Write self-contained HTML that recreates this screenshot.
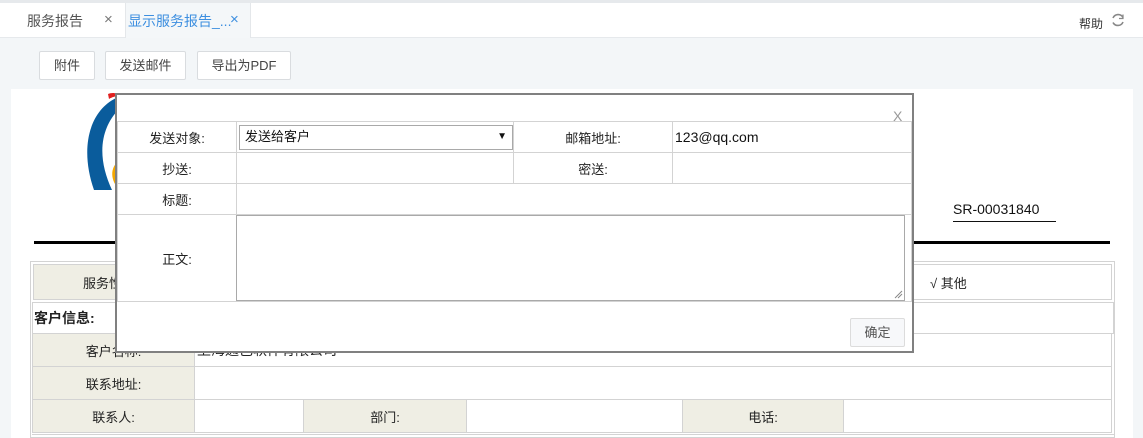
<!DOCTYPE html>
<html><head><meta charset="utf-8"><style>
*{margin:0;padding:0;box-sizing:border-box}
body{width:1143px;height:438px;overflow:hidden;background:#f3f6f8;font-family:"Liberation Sans","Noto Sans CJK SC",sans-serif;font-size:13px;color:#333;position:relative}
.a{position:absolute}
.btn{position:absolute;top:51px;height:29px;background:#fff;border:1px solid #d9dcdf;border-radius:2px;text-align:center;line-height:27px;font-size:13px;color:#444}
.c{position:absolute;border:1px solid #d3d3d3;font-size:13px;color:#222;display:flex;align-items:center;justify-content:center}
.lb{background:#efeee4}
</style></head><body>
<div class="a" style="left:0;top:0;width:1143px;height:38px;background:#fff;border-top:3px solid #e6e9ec;border-bottom:1px solid #e6e9ec"></div>
<div class="a" style="left:125px;top:3px;width:126px;height:35px;background:#f4f7f9;border-left:1px solid #e4e7ea;border-right:1px solid #e4e7ea"></div>
<div class="a" style="left:27px;top:11px;font-size:14px;color:#555">服务报告</div>
<div class="a" style="left:104px;top:11px;font-size:15px;line-height:18px;color:#777">×</div>
<div class="a" style="left:128px;top:11px;font-size:14px;color:#3d8fe0">显示服务报告_...</div>
<div class="a" style="left:230px;top:11px;font-size:15px;line-height:18px;color:#3d8fe0">×</div>
<div class="a" style="left:1079px;top:15px;font-size:12px;color:#333">帮助</div>
<svg class="a" style="left:1110px;top:12px" width="16" height="16" viewBox="0 0 16 16"><path d="M3 6A5.5 5.5 0 0 1 13 5.5M13 10A5.5 5.5 0 0 1 3 10.5" fill="none" stroke="#888" stroke-width="1.6"/><path d="M13 2.5v4h-4" fill="none" stroke="#888" stroke-width="1.2"/></svg>

<div class="btn" style="left:39px;width:56px">附件</div>
<div class="btn" style="left:105px;width:81px">发送邮件</div>
<div class="btn" style="left:197px;width:94px">导出为PDF</div>

<div class="a" style="left:11px;top:89px;width:1122px;height:349px;background:#fff"></div>
<svg class="a" style="left:82px;top:90px" width="40" height="105" viewBox="0 0 40 105"><path d="M34 8 C6 22 -2 60 12 100 L30 100 C16 70 16 40 38 18Z" fill="#0a5c9c"/><path d="M26 4 C30 2 36 3 38 6 C34 6 30 7 27 9Z" fill="#e02020"/><path d="M38 70 C26 78 30 92 36 98 L38 98Z" fill="#f5a800"/></svg>
<div class="a" style="left:953px;top:201px;font-size:14px;color:#111">SR-00031840</div>
<div class="a" style="left:953px;top:221px;width:103px;height:1px;background:#111"></div>
<div class="a" style="left:34px;top:241px;width:1076px;height:3px;background:#000"></div>

<div class="a" style="left:30px;top:261px;width:1085px;height:177px;border:1px solid #d3d3d3"></div>
<div class="c lb" style="left:33px;top:264px;width:360px;height:36px;justify-content:flex-start;padding-left:49px">服务性质</div>
<div class="c" style="left:392px;top:264px;width:720px;height:36px;justify-content:flex-start;padding-left:537px">√ 其他</div>
<div class="c" style="left:32px;top:302px;width:1082px;height:32px;justify-content:flex-start;padding-left:1px;font-weight:bold;font-size:14px">客户信息:</div>
<div class="c lb" style="left:32px;top:333px;width:163px;height:34px">客户名称:</div>
<div class="c" style="left:194px;top:333px;width:918px;height:34px;justify-content:flex-start;padding-left:2px;font-size:14px">上海通己软件有限公司</div>
<div class="c lb" style="left:32px;top:366px;width:163px;height:34px">联系地址:</div>
<div class="c" style="left:194px;top:366px;width:918px;height:34px"></div>
<div class="c lb" style="left:32px;top:399px;width:163px;height:34px">联系人:</div>
<div class="c" style="left:194px;top:399px;width:110px;height:34px"></div>
<div class="c lb" style="left:303px;top:399px;width:164px;height:34px">部门:</div>
<div class="c" style="left:466px;top:399px;width:217px;height:34px"></div>
<div class="c lb" style="left:682px;top:399px;width:162px;height:34px">电话:</div>
<div class="c" style="left:843px;top:399px;width:269px;height:34px"></div>
<div class="a" style="left:32px;top:434px;width:1082px;height:4px;border-top:1px solid #d3d3d3"></div>

<div class="a" style="left:115px;top:93px;width:799px;height:260px;background:#fff;border:2px solid #808080"></div>
<div class="a" style="left:893px;top:108px;font-size:14px;color:#999">X</div>
<div class="c" style="left:117px;top:121px;width:120px;height:32px">发送对象:</div>
<div class="c" style="left:236px;top:121px;width:278px;height:32px"></div>
<div class="a" style="left:239px;top:125px;width:274px;height:25px;border:1px solid #a9a9a9;font-size:13px;line-height:22px;padding-left:5px;color:#111">发送给客户<span style="position:absolute;right:5px;font-size:10px">▼</span></div>
<div class="c" style="left:513px;top:121px;width:160px;height:32px">邮箱地址:</div>
<div class="c" style="left:672px;top:121px;width:240px;height:32px;justify-content:flex-start;padding-left:2px;font-size:14px;color:#111">123@qq.com</div>
<div class="c" style="left:117px;top:152px;width:120px;height:32px">抄送:</div>
<div class="c" style="left:236px;top:152px;width:278px;height:32px"></div>
<div class="c" style="left:513px;top:152px;width:160px;height:32px">密送:</div>
<div class="c" style="left:672px;top:152px;width:240px;height:32px"></div>
<div class="c" style="left:117px;top:183px;width:120px;height:32px">标题:</div>
<div class="c" style="left:236px;top:183px;width:676px;height:32px"></div>
<div class="c" style="left:117px;top:214px;width:120px;height:88px">正文:</div>
<div class="c" style="left:236px;top:214px;width:676px;height:88px"></div>
<div class="a" style="left:236px;top:215px;width:669px;height:86px;border:1px solid #a9a9a9;background:#fff"></div>
<svg class="a" style="left:893px;top:289px" width="10" height="10"><path d="M2 9L9 2M5 9L9 5" stroke="#888" stroke-width="1"/></svg>
<div class="a" style="left:850px;top:318px;width:55px;height:29px;border:1px solid #dcdcdc;border-radius:2px;background:#f7f8fa;text-align:center;line-height:27px;font-size:13px;color:#555">确定</div>
</body></html>
